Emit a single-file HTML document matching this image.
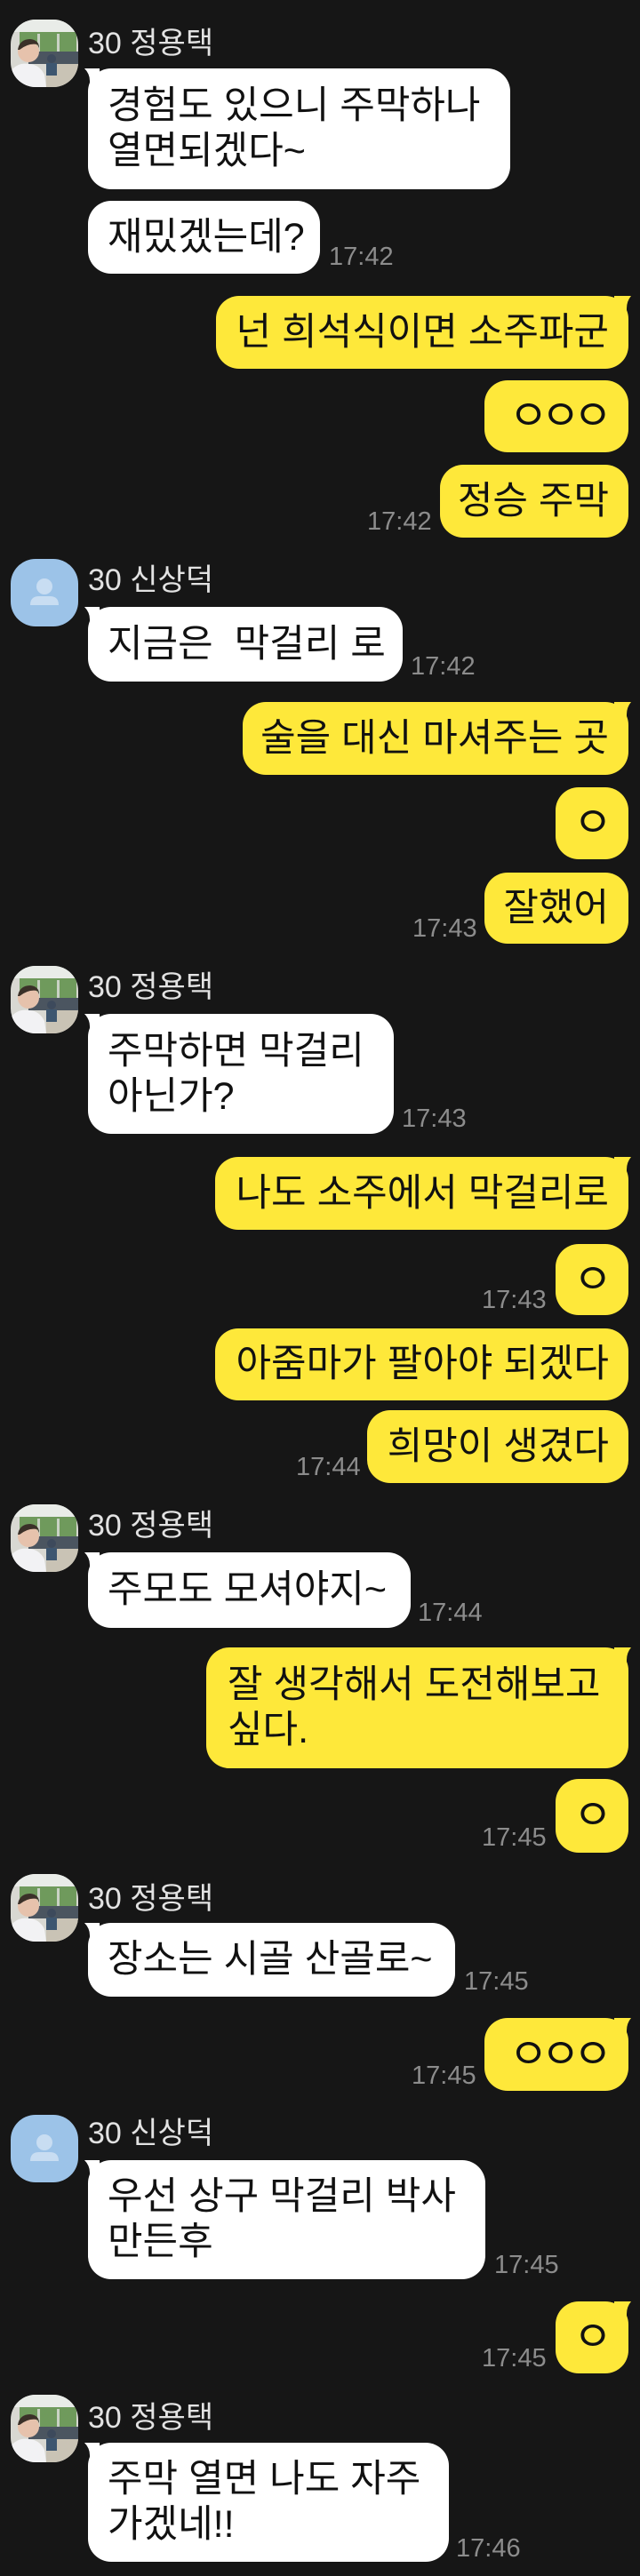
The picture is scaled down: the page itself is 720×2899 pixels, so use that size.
<!DOCTYPE html>
<html><head><meta charset="utf-8">
<style>
*{margin:0;padding:0;box-sizing:border-box}
html,body{width:720px;height:2899px;background:#161616;overflow:hidden}
body{position:relative;font-family:"Liberation Sans","Noto Sans CJK KR",sans-serif}
.b{position:absolute;border-radius:26px;font-family:"Liberation Sans","Noto Sans CJK KR",sans-serif;font-size:43px;line-height:51px;color:#111;padding-left:22px;white-space:nowrap;display:flex;align-items:center}
.w{background:#fff;left:99px}
.y{background:#fee83a;right:13px;padding-left:0;padding-right:22px;justify-content:flex-end}
.o{font-size:48px;line-height:51px;letter-spacing:-8px;margin-right:4px}
.t{position:absolute;font-size:29px;color:#8c8c8c;line-height:30px}
.n{position:absolute;left:99px;font-size:34px;color:#e2e2e2;line-height:36px}
.av{position:absolute;left:12px;width:76px;height:76px;border-radius:28px;overflow:hidden}
.tl{position:absolute;left:93px;width:20px;height:24px}
.tr{position:absolute;left:691px;width:22px;height:24px}
</style></head><body>

<svg width="0" height="0" style="position:absolute">
<defs>
<g id="photo">
<rect width="76" height="76" fill="#d8d8d2"/>
<rect x="0" y="0" width="76" height="14" fill="#e9ece8"/>
<rect x="10" y="14" width="64" height="22" fill="#6f9a5c"/>
<rect x="30" y="16" width="3" height="20" fill="#c9d2c4"/>
<rect x="52" y="16" width="3" height="20" fill="#c9d2c4"/>
<rect x="20" y="36" width="56" height="14" fill="#4b5560"/>
<rect x="40" y="50" width="36" height="26" fill="#c9c3b5"/>
<circle cx="46" cy="44" r="5" fill="#3d4a5c"/>
<rect x="40" y="49" width="12" height="14" fill="#3d5670"/>
<circle cx="20" cy="36" r="12" fill="#e6c2ac"/>
<path d="M8 34 Q10 22 22 22 Q32 23 32 32 L30 28 Q20 26 10 34Z" fill="#3a3028"/>
<path d="M0 76 L0 58 Q8 48 20 50 Q32 50 38 62 L40 76Z" fill="#f2f2f4"/>
</g>
<g id="blank">
<rect width="76" height="76" fill="#9cc3e8"/>
<circle cx="38" cy="31" r="9" fill="#c8ddf2"/>
<path d="M22 52 Q22 42 32 42 L44 42 Q54 42 54 52 Z" fill="#c8ddf2"/>
</g>
<path id="tlp" d="M19 0 L2 0 Q8 6 8 14 L8 24 L20 24 Z"/>
<path id="trp" d="M0 0 L19 0 Q14 6 14 14 L14 24 L0 24 Z"/>
</defs>
</svg>

<svg class="av" style="top:22px" viewBox="0 0 76 76"><use href="#photo"/></svg>
<div class="n" style="top:31px">30 정용택</div>
<div class="b w" style="top:77px;width:475px;height:136px">경험도 있으니 주막하나<br>열면되겠다~</div>
<svg class="tl" style="top:77px" viewBox="0 0 20 24"><use href="#tlp" fill="#fff"/></svg>
<div class="b w" style="top:226px;width:261px;height:82px">재밌겠는데?</div>
<div class="t" style="left:370px;top:274px">17:42</div>

<div class="b y" style="top:333px;width:464px;height:82px">넌 희석식이면 소주파군</div>
<svg class="tr" style="top:333px" viewBox="0 0 22 24"><use href="#trp" fill="#fee83a"/></svg>
<div class="b y" style="top:428px;width:162px;height:81px"><span class="o">ㅇㅇㅇ</span></div>
<div class="b y" style="top:523px;width:212px;height:82px">정승 주막</div>
<div class="t" style="left:413px;top:572px">17:42</div>

<svg class="av" style="top:629px" viewBox="0 0 76 76"><use href="#blank"/></svg>
<div class="n" style="top:635px">30 신상덕</div>
<div class="b w" style="top:683px;width:354px;height:84px">지금은&nbsp; 막걸리 로</div>
<svg class="tl" style="top:683px" viewBox="0 0 20 24"><use href="#tlp" fill="#fff"/></svg>
<div class="t" style="left:462px;top:735px">17:42</div>

<div class="b y" style="top:790px;width:434px;height:82px">술을 대신 마셔주는 곳</div>
<svg class="tr" style="top:790px" viewBox="0 0 22 24"><use href="#trp" fill="#fee83a"/></svg>
<div class="b y" style="top:886px;width:82px;height:81px"><span class="o">ㅇ</span></div>
<div class="b y" style="top:982px;width:162px;height:80px">잘했어</div>
<div class="t" style="left:464px;top:1030px">17:43</div>

<svg class="av" style="top:1087px" viewBox="0 0 76 76"><use href="#photo"/></svg>
<div class="n" style="top:1093px">30 정용택</div>
<div class="b w" style="top:1141px;width:344px;height:135px">주막하면 막걸리<br>아닌가?</div>
<svg class="tl" style="top:1141px" viewBox="0 0 20 24"><use href="#tlp" fill="#fff"/></svg>
<div class="t" style="left:452px;top:1244px">17:43</div>

<div class="b y" style="top:1302px;width:465px;height:82px">나도 소주에서 막걸리로</div>
<svg class="tr" style="top:1302px" viewBox="0 0 22 24"><use href="#trp" fill="#fee83a"/></svg>
<div class="b y" style="top:1400px;width:82px;height:80px"><span class="o">ㅇ</span></div>
<div class="t" style="left:542px;top:1448px">17:43</div>
<div class="b y" style="top:1495px;width:465px;height:81px">아줌마가 팔아야 되겠다</div>
<div class="b y" style="top:1587px;width:294px;height:82px">희망이 생겼다</div>
<div class="t" style="left:333px;top:1636px">17:44</div>

<svg class="av" style="top:1693px" viewBox="0 0 76 76"><use href="#photo"/></svg>
<div class="n" style="top:1699px">30 정용택</div>
<div class="b w" style="top:1747px;width:363px;height:85px">주모도 모셔야지~</div>
<svg class="tl" style="top:1747px" viewBox="0 0 20 24"><use href="#tlp" fill="#fff"/></svg>
<div class="t" style="left:470px;top:1800px">17:44</div>

<div class="b y" style="top:1854px;width:475px;height:136px;justify-content:flex-start;padding-left:24px">잘 생각해서 도전해보고<br>싶다.</div>
<svg class="tr" style="top:1854px" viewBox="0 0 22 24"><use href="#trp" fill="#fee83a"/></svg>
<div class="b y" style="top:2002px;width:82px;height:83px"><span class="o">ㅇ</span></div>
<div class="t" style="left:542px;top:2053px">17:45</div>

<svg class="av" style="top:2109px" viewBox="0 0 76 76"><use href="#photo"/></svg>
<div class="n" style="top:2119px">30 정용택</div>
<div class="b w" style="top:2164px;width:413px;height:83px">장소는 시골 산골로~</div>
<svg class="tl" style="top:2164px" viewBox="0 0 20 24"><use href="#tlp" fill="#fff"/></svg>
<div class="t" style="left:522px;top:2215px">17:45</div>

<div class="b y" style="top:2271px;width:162px;height:82px"><span class="o">ㅇㅇㅇ</span></div>
<svg class="tr" style="top:2271px" viewBox="0 0 22 24"><use href="#trp" fill="#fee83a"/></svg>
<div class="t" style="left:463px;top:2321px">17:45</div>

<svg class="av" style="top:2380px" viewBox="0 0 76 76"><use href="#blank"/></svg>
<div class="n" style="top:2383px">30 신상덕</div>
<div class="b w" style="top:2431px;width:447px;height:134px">우선 상구 막걸리 박사<br>만든후</div>
<svg class="tl" style="top:2431px" viewBox="0 0 20 24"><use href="#tlp" fill="#fff"/></svg>
<div class="t" style="left:556px;top:2534px">17:45</div>

<div class="b y" style="top:2590px;width:82px;height:81px"><span class="o">ㅇ</span></div>
<svg class="tr" style="top:2590px" viewBox="0 0 22 24"><use href="#trp" fill="#fee83a"/></svg>
<div class="t" style="left:542px;top:2639px">17:45</div>

<svg class="av" style="top:2695px" viewBox="0 0 76 76"><use href="#photo"/></svg>
<div class="n" style="top:2703px">30 정용택</div>
<div class="b w" style="top:2749px;width:406px;height:134px">주막 열면 나도 자주<br>가겠네!!</div>
<svg class="tl" style="top:2749px" viewBox="0 0 20 24"><use href="#tlp" fill="#fff"/></svg>
<div class="t" style="left:513px;top:2853px">17:46</div>

</body></html>
